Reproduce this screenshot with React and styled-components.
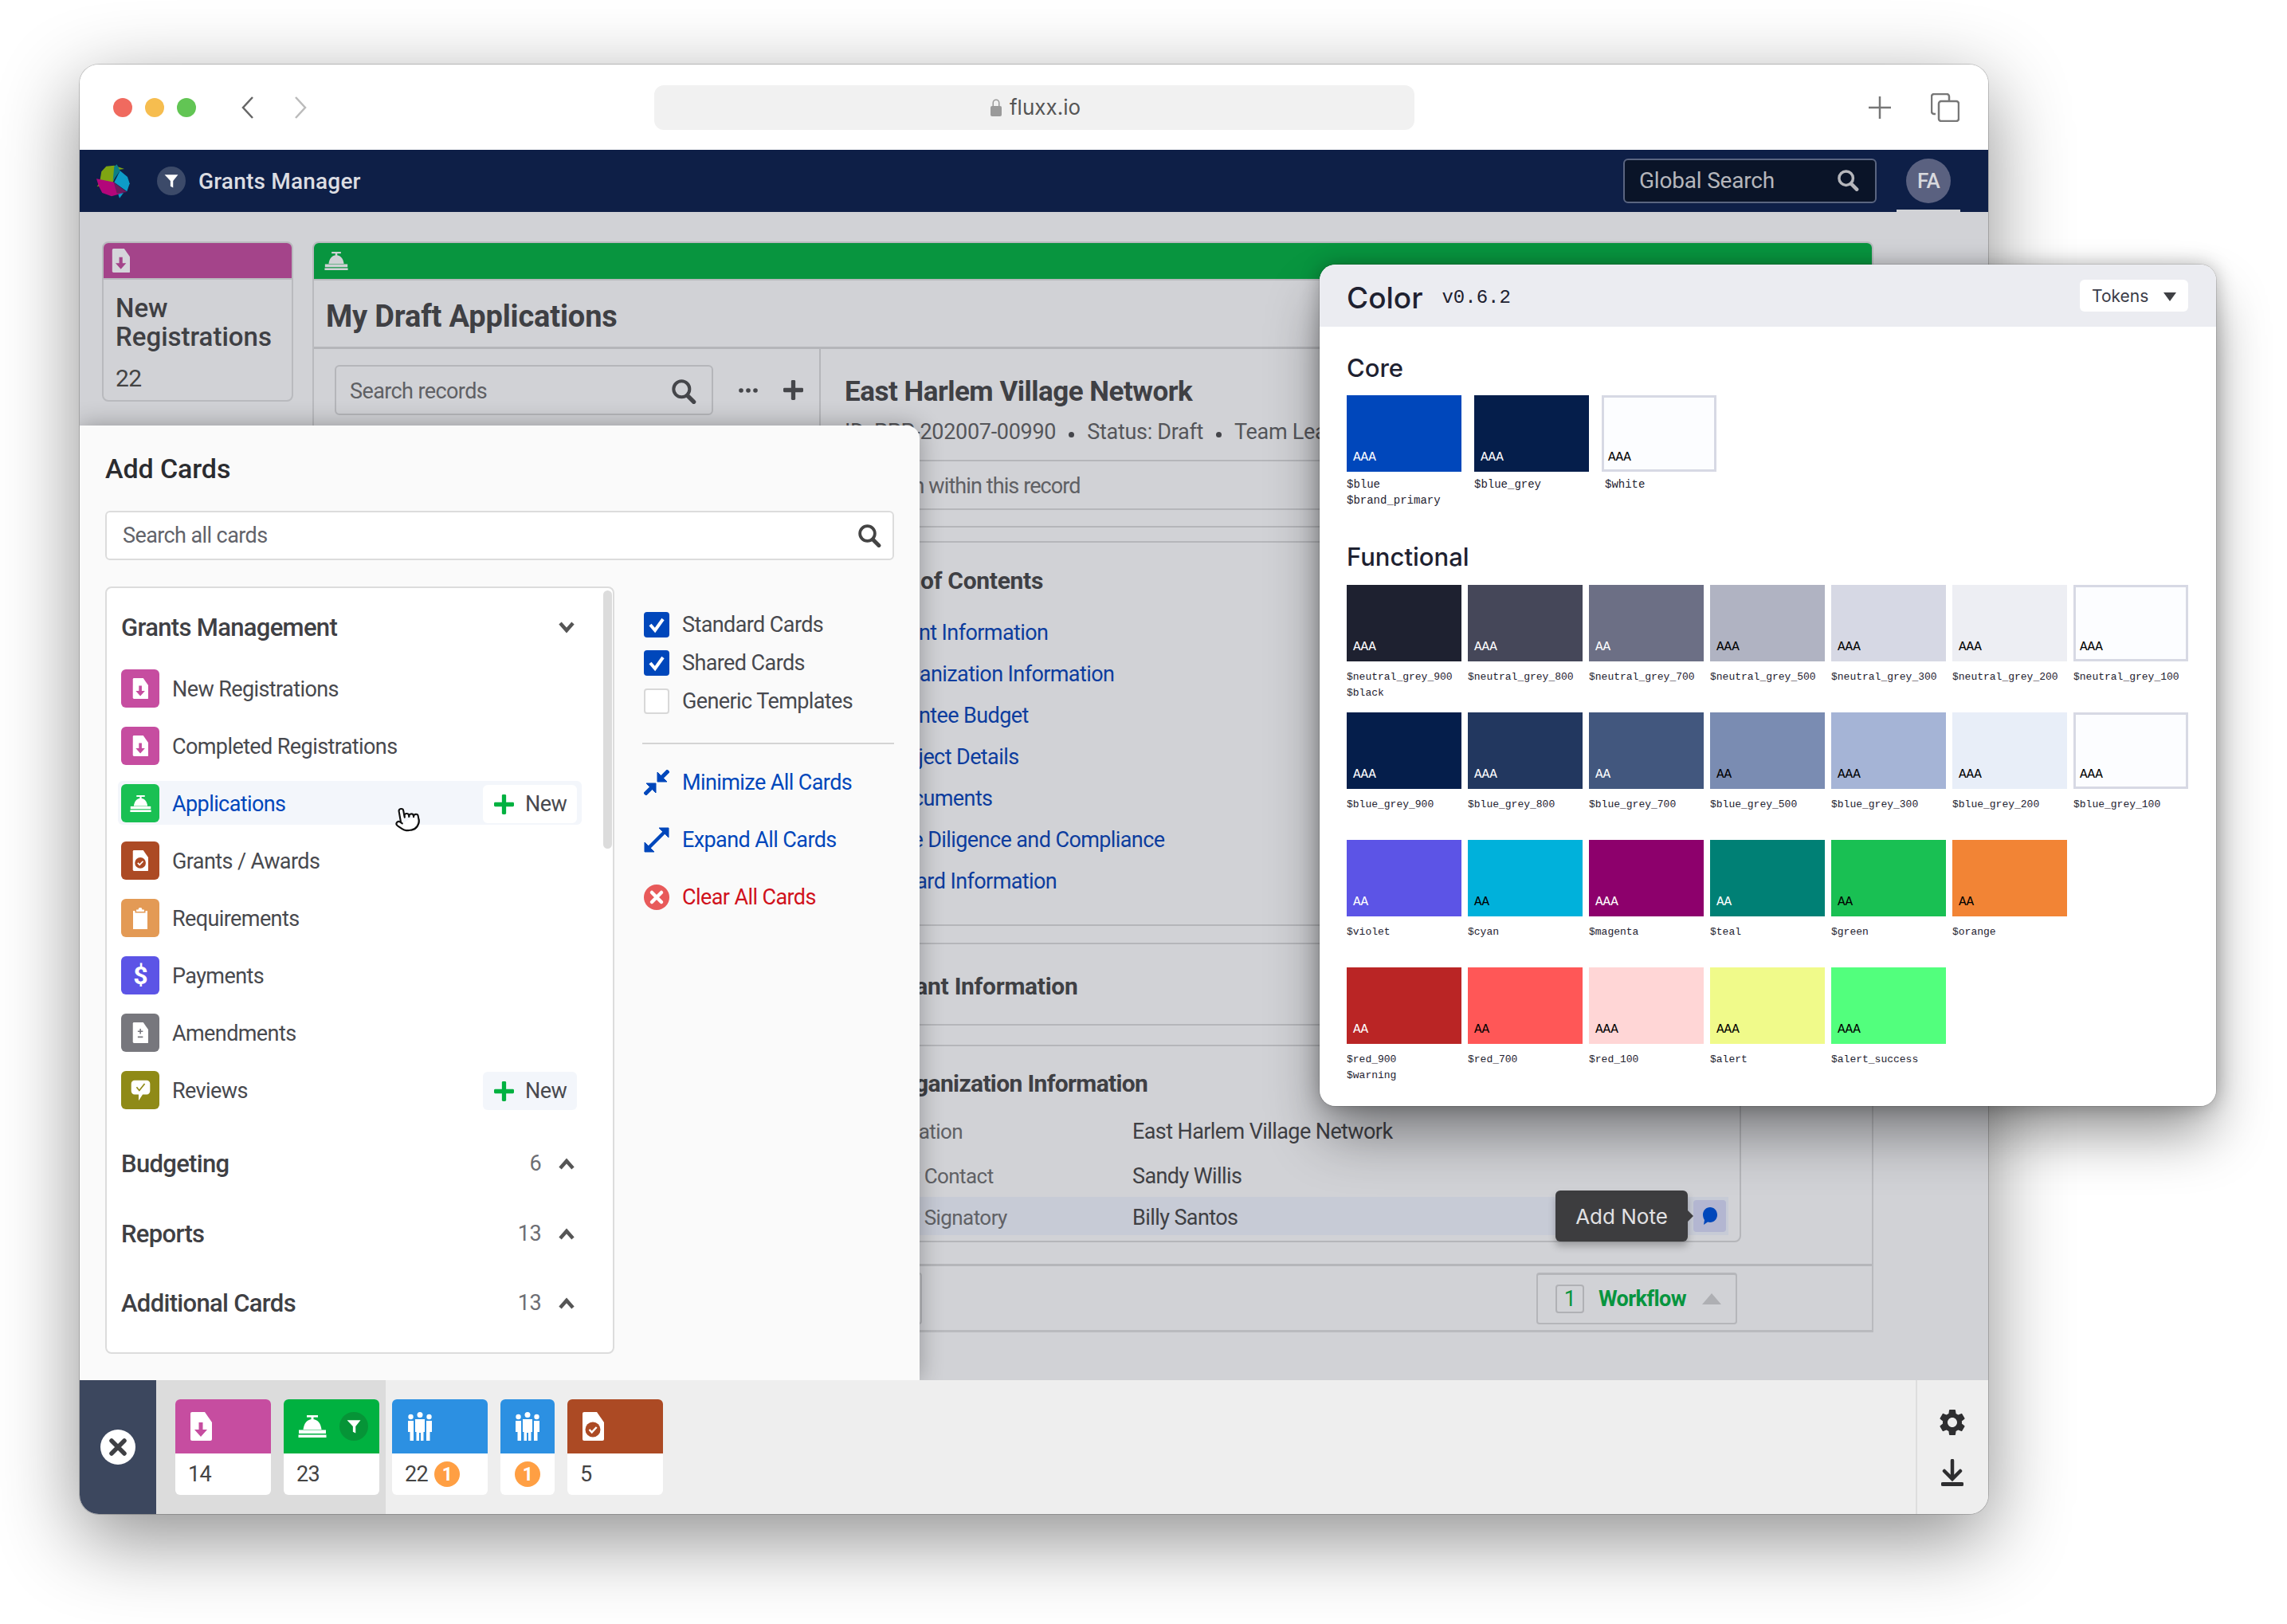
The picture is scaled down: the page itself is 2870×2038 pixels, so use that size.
import React from 'react'
import styled, { createGlobalStyle } from 'styled-components'
import { Pointer } from 'lucide-react'
import { MdSettings } from 'react-icons/md'

const SANS = 'Roboto, "Liberation Sans", Arial, sans-serif'
const UI = 'Inter, "Liberation Sans", sans-serif'
const MONO = '"Liberation Mono", "DejaVu Sans Mono", monospace'

const GlobalStyle = createGlobalStyle`
    html, body {
        margin: 0;
        padding: 0;
        background: #fff;
    }
    * {
        box-sizing: border-box;
        letter-spacing: -0.022em;
    }
`

const CORE = [
    { name: ['$blue', '$brand_primary'], color: '#0047bb', rating: 'AAA', light: true },
    { name: ['$blue_grey'], color: '#051e4b', rating: 'AAA', light: true },
    { name: ['$white'], color: '#fcfdff', rating: 'AAA', outlined: true },
]

const FUNCTIONAL = [
    { name: ['$neutral_grey_900', '$black'], color: '#1e2130', rating: 'AAA', light: true },
    { name: ['$neutral_grey_800'], color: '#454759', rating: 'AAA', light: true },
    { name: ['$neutral_grey_700'], color: '#6c6f85', rating: 'AA', light: true },
    { name: ['$neutral_grey_500'], color: '#b0b3c2', rating: 'AAA' },
    { name: ['$neutral_grey_300'], color: '#d6d8e4', rating: 'AAA' },
    { name: ['$neutral_grey_200'], color: '#edeef3', rating: 'AAA' },
    { name: ['$neutral_grey_100'], color: '#fcfdff', rating: 'AAA', outlined: true },
    { name: ['$blue_grey_900'], color: '#051e4b', rating: 'AAA', light: true },
    { name: ['$blue_grey_800'], color: '#22375f', rating: 'AAA', light: true },
    { name: ['$blue_grey_700'], color: '#42577e', rating: 'AA', light: true },
    { name: ['$blue_grey_500'], color: '#7a8cb2', rating: 'AA' },
    { name: ['$blue_grey_300'], color: '#a5b4d6', rating: 'AAA' },
    { name: ['$blue_grey_200'], color: '#e8eef8', rating: 'AAA' },
    { name: ['$blue_grey_100'], color: '#fcfdff', rating: 'AAA', outlined: true },
    { name: ['$violet'], color: '#5c54e6', rating: 'AA', light: true },
    { name: ['$cyan'], color: '#00b1db', rating: 'AA' },
    { name: ['$magenta'], color: '#8d006c', rating: 'AAA', light: true },
    { name: ['$teal'], color: '#008075', rating: 'AA', light: true },
    { name: ['$green'], color: '#19c053', rating: 'AA' },
    { name: ['$orange'], color: '#f28435', rating: 'AA' },
    null,
    { name: ['$red_900', '$warning'], color: '#ba2525', rating: 'AA', light: true },
    { name: ['$red_700'], color: '#ff5757', rating: 'AA' },
    { name: ['$red_100'], color: '#ffd6d6', rating: 'AAA' },
    { name: ['$alert'], color: '#f0fa8a', rating: 'AAA' },
    { name: ['$alert_success'], color: '#52ff7d', rating: 'AAA' },
]

const TOC = [
    'Grant Information',
    'Organization Information',
    'Grantee Budget',
    'Project Details',
    'Documents',
    'Due Diligence and Compliance',
    'Award Information',
]

function SearchIcon({ size = 30, color = '#444' }) {
    return (
        <svg width={size} height={size} viewBox="0 0 24 24" fill="none" stroke={color}>
            <circle cx="10" cy="10" r="7.5" strokeWidth="3" />
            <line x1="15.5" y1="16" x2="21.5" y2="22" strokeWidth="4" strokeLinecap="round" />
        </svg>
    )
}

function DocShape({ children, size = 36, fill = '#fff' }) {
    return (
        <svg width={size * 28 / 36} height={size} viewBox="0 0 28 36">
            <path d="M1 2a2 2 0 0 1 2-2H19L28 13V34a2 2 0 0 1-2 2H3a2 2 0 0 1-2-2Z" fill={fill} />
            {children}
        </svg>
    )
}

function DocArrow({ color, size, fill }) {
    return (
        <DocShape size={size} fill={fill}>
            <path d="M11.500 13h5v9h5.500L14 31l-8-9h5.500Z" fill={color} />
        </DocShape>
    )
}

function DocCheck({ color, size }) {
    return (
        <DocShape size={size}>
            <circle cx="14" cy="22" r="9.500" fill={color} />
            <path d="M9.500 22l3.200 3.400 6-6.400" fill="none" stroke="#fff" strokeWidth="2.400" />
        </DocShape>
    )
}

function DocPlusMinus({ color, size }) {
    return (
        <DocShape size={size}>
            <path d="M14 11v9M9.500 15.500h9M9.500 25.500h9" fill="none" stroke={color} strokeWidth="2.200" />
        </DocShape>
    )
}

function Bell({ size = 36, color = '#fff' }) {
    return (
        <svg width={size} height={size * 28 / 36} viewBox="0 0 36 28" fill={color}>
            <rect x="11" y="0" width="14" height="2.600" />
            <rect x="16.500" y="2" width="3" height="4" />
            <path d="M18 5c-6.500 0-10.500 5-11.500 13h23C28.500 10 24.500 5 18 5Z" />
            <path d="M1 18.500H35V23H1Z" />
            <rect x="0.500" y="24.500" width="35" height="3.500" />
        </svg>
    )
}

function People({ size = 36 }) {
    return (
        <svg width={size * 34 / 36} height={size} viewBox="0 0 34 36" fill="#fff">
            <circle cx="17" cy="3.500" r="3.500" />
            <circle cx="5.500" cy="6" r="3.200" />
            <circle cx="28.500" cy="6" r="3.200" />
            <path d="M11 9h12v16h-1.500v11h-3.500V26h-2v10h-3.500V25H11Z" />
            <path d="M2 11h7v25H4.500V25H2Z" />
            <path d="M25 11h7v14h-2.500v11H25Z" />
        </svg>
    )
}

function Funnel({ size = 18, color = '#fff' }) {
    return (
        <svg width={size} height={size} viewBox="0 0 16 16" fill={color}>
            <path d="M0.500 1H15.500L10 8V15.500L7 14V8Z" />
        </svg>
    )
}

function Clipboard() {
    return (
        <svg width="20" height="27" viewBox="0 0 24 33" fill="#fff">
            <path d="M9 3a3 3 0 0 1 6 0h3v3H6V3Z" />
            <path d="M1 5h3v3h16V5h3v28H1Z" />
        </svg>
    )
}

function SpeechCheck({ color }) {
    return (
        <svg width="27" height="27" viewBox="0 0 30 32">
            <path d="M6 1H24a5 5 0 0 1 5 5V17a5 5 0 0 1-5 5H18L12 31V22H6a5 5 0 0 1-5-5V6a5 5 0 0 1 5-5Z" fill="#fff" />
            <path d="M9 11l4 5 8-10" fill="none" stroke={color} strokeWidth="2" />
        </svg>
    )
}

function Logo() {
    return (
        <svg width="43" height="44" viewBox="0 0 43 44">
            <polygon points="5,24 7.300,10.300 13.300,3.700 23.300,2.700 36,7 28.300,8 21.700,23.700 1.700,29.300" fill="#7fa512" />
            <polygon points="23.300,3.700 26.700,1.300 30.700,9.300 21.700,22" fill="#0b7f86" />
            <polygon points="30.700,9.300 40,17 42.700,25.300 39.300,35.300 23.300,23.700" fill="#0d9cc8" />
            <polygon points="1,19.300 23.300,23.700 30,35.300 35,37 20,41.300 8.300,37 4,28.700" fill="#b3067a" />
            <polygon points="22.700,23.700 39.300,36 26.700,37.700" fill="#6d1a5e" />
            <polygon points="28.300,38.700 35,37 30,43.700" fill="#0d9cc8" />
        </svg>
    )
}

function Chevron({ up }) {
    return (
        <svg width="20" height="15" viewBox="0 0 20 15" fill="none" stroke="#555" strokeWidth="4.500">
            <path d={up ? 'M2 13L10 4l8 9' : 'M2 2l8 9 8-9'} />
        </svg>
    )
}

const Page = styled.div`
    width: 2870px;
    height: 2038px;
    padding: 81px 0 0 100px;
    overflow: hidden;
    font-family: ${SANS};
`
const Window = styled.div`
    position: relative;
    width: 2395px;
    height: 1819px;
    border-radius: 24px;
    box-shadow: 0 30px 100px rgba(0, 0, 0, 0.45), 0 0 0 1px rgba(0, 0, 0, 0.18);
`
const Chrome = styled.header`
    display: grid;
    grid-template-columns: 721px 954px 1fr;
    align-items: center;
    height: 107px;
    background: #fff;
    border-radius: 24px 24px 0 0;
`
const ChromeLeft = styled.div`
    display: flex;
    align-items: center;
    padding-left: 42px;
`
const Dot = styled.span`
    width: 24px;
    height: 24px;
    margin-right: 16px;
    border-radius: 50%;
    background: ${props => props.$color};
`
const NavArrows = styled.div`
    display: flex;
    gap: 50px;
    margin-left: 41px;
`
const UrlBar = styled.div`
    display: flex;
    align-items: center;
    height: 56px;
    padding-left: 421px;
    gap: 9px;
    border-radius: 12px;
    background: #f1f1f1;
    font-family: ${UI};
    font-size: 26px;
    letter-spacing: 0;
    color: #555;
`
const ChromeRight = styled.div`
    display: flex;
    align-items: center;
    justify-content: flex-end;
    gap: 50px;
    padding-right: 36px;
`
const AppNav = styled.nav`
    display: flex;
    align-items: center;
    height: 78px;
    padding: 0 47px 0 20px;
    background: #0e1f47;
`
const FilterBadge = styled.span`
    display: flex;
    align-items: center;
    justify-content: center;
    width: 36px;
    height: 36px;
    margin: ${props => props.$flush ? '0' : '0 16px 0 34px'};
    border-radius: 50%;
    background: ${props => props.$color};
`
const AppName = styled.span`
    font-weight: 500;
    font-size: 28px;
    letter-spacing: 0.2px;
    color: #dcdde2;
`
const GlobalSearch = styled.div`
    display: flex;
    align-items: center;
    justify-content: space-between;
    width: 318px;
    height: 56px;
    margin-left: auto;
    padding: 0 20px 2px 18px;
    border: 2px solid #5a6580;
    border-radius: 6px;
    background: #0a1428;
    font-size: 28px;
    letter-spacing: -0.2px;
    color: #b5b6bb;
`
const Avatar = styled.div`
    position: relative;
    display: flex;
    align-items: center;
    justify-content: center;
    width: 56px;
    height: 56px;
    margin-left: 37px;
    border-radius: 50%;
    background: #5a6180;
    font-weight: 500;
    font-size: 26px;
    color: #d8d9de;
    &::after {
        content: '';
        position: absolute;
        left: -12px;
        bottom: -12px;
        width: 80px;
        height: 4px;
        background: #d1d2d6;
    }
`
const Content = styled.main`
    display: flex;
    align-items: flex-start;
    gap: 24px;
    height: 1466px;
    padding: 37px 0 0 28px;
    overflow: hidden;
    background: #d1d2d6;
`
const MiniCard = styled.section`
    width: 240px;
    height: 201px;
    flex-shrink: 0;
    overflow: hidden;
    border: 2px solid #b9babe;
    border-radius: 8px;
`
const MiniHeader = styled.div`
    display: flex;
    align-items: center;
    height: 46px;
    padding-left: 10px;
    background: #a4448a;
    border-bottom: 2px solid #b9babe;
`
const MiniTitle = styled.div`
    margin: 18px 0 0 15px;
    font-weight: 500;
    font-size: 33px;
    line-height: 36px;
    letter-spacing: 0;
    color: #3f4044;
`
const MiniCount = styled.div`
    margin: 16px 0 0 15px;
    font-size: 30px;
    line-height: 36px;
    color: #444;
`
const MainCard = styled.section`
    width: 1959px;
    height: 1369px;
    flex-shrink: 0;
    overflow: hidden;
    border: 2px solid #b9babe;
    border-bottom-width: 3px;
    border-radius: 8px 8px 0 0;
`
const MainHeader = styled.div`
    display: flex;
    align-items: center;
    height: 47px;
    padding-left: 13px;
    background: #08953f;
    border-bottom: 2px solid #b9babe;
`
const MainTitle = styled.h1`
    display: flex;
    align-items: center;
    height: 86px;
    margin: 0;
    padding: 6px 0 0 15px;
    border-bottom: 3px solid #b5b6ba;
    font-size: 38px;
    font-weight: 700;
    letter-spacing: -0.17px;
    color: #3f4044;
`
const MainBody = styled.div`
    display: flex;
    height: 1232px;
`
const ListColumn = styled.div`
    display: flex;
    align-items: flex-start;
    width: 636px;
    padding: 20px 0 0 26px;
    border-right: 2px solid #b5b6ba;
`
const RecordSearch = styled.div`
    display: flex;
    align-items: center;
    justify-content: space-between;
    width: 475px;
    height: 63px;
    padding: 2px 19px 0 17px;
    border: 2px solid #b5b6ba;
    border-radius: 6px;
    font-size: 27px;
    color: #5f6064;
`
const ListTools = styled.div`
    display: flex;
    align-items: center;
    gap: 32px;
    height: 63px;
    margin-left: 32px;
`
const RecordColumn = styled.div`
    flex: 1;
    display: flex;
    flex-direction: column;
`
const RecordHead = styled.div`
    height: 141px;
    padding: 34px 0 0 30px;
    border-bottom: 2px solid #b5b6ba;
`
const RecordName = styled.h2`
    margin: 0;
    font-size: 35px;
    line-height: 40px;
    font-weight: 700;
    letter-spacing: -0.5px;
    color: #3f4044;
`
const RecordMeta = styled.div`
    display: flex;
    align-items: center;
    gap: 16px;
    margin-top: 12px;
    font-size: 27px;
    line-height: 36px;
    white-space: nowrap;
    color: #55565a;
    span {
        letter-spacing: -0.3px;
    }
`
const MetaDot = styled.span`
    width: 7px;
    height: 7px;
    margin-top: 6px;
    border-radius: 50%;
    background: #44454a;
`
const RecordSearchRow = styled.div`
    display: flex;
    align-items: center;
    height: 61px;
    padding: 2px 0 0 52px;
    border-bottom: 2px solid #b5b6ba;
    font-size: 27px;
    letter-spacing: -0.9px;
    color: #5f6064;
`
const Section = styled.div`
    height: ${props => props.$height}px;
    margin-top: ${props => props.$gap}px;
    padding-left: ${props => props.$indent}px;
    border-top: 2px solid #b5b6ba;
    border-bottom: 2px solid #b5b6ba;
`
const SectionStrip = styled.div`
    height: 19px;
    margin-top: 20px;
    border-top: 2px solid #b5b6ba;
`
const SectionTitle = styled.h3`
    margin: ${props => props.$top}px 0 0;
    padding-left: ${props => props.$indent || 0}px;
    font-size: 30px;
    line-height: 36px;
    font-weight: 700;
    letter-spacing: ${props => props.$spacing}px;
    color: #3f4044;
`
const TocList = styled.div`
    margin: 21px 0 0 37px;
`
const TocLink = styled.div`
    height: 52px;
    font-size: 27px;
    line-height: 52px;
    color: #0d3d9e;
`
const OrgSection = styled.div`
    position: relative;
    height: 248px;
    margin: 24px 164px 0 0;
    padding-top: 1px;
    border: 2px solid #b5b6ba;
    border-radius: 0 0 8px 0;
`
const OrgRows = styled.div`
    display: flex;
    flex-direction: column;
    gap: 2px;
    margin: 12px 14px 0 0;
`
const OrgRow = styled.div`
    position: relative;
    display: flex;
    align-items: center;
    height: ${props => props.$height}px;
    padding: 3px 0 0 36px;
    background: ${props => props.$active ? '#c7cbd6' : 'transparent'};
`
const OrgLabel = styled.span`
    width: 353px;
    font-size: 26px;
    color: #606165;
`
const OrgValue = styled.span`
    font-size: 27px;
    color: #3f4044;
`
const NoteButton = styled.span`
    position: absolute;
    right: 3px;
    top: 4px;
    display: flex;
    align-items: center;
    justify-content: center;
    width: 41px;
    height: 40px;
    border-radius: 4px;
    background: #b3b6d1;
`
const Tooltip = styled.div`
    position: absolute;
    right: 51px;
    top: -8px;
    display: flex;
    align-items: center;
    justify-content: center;
    width: 166px;
    height: 64px;
    border-radius: 6px;
    background: #3d3d3f;
    box-shadow: 0 6px 10px rgba(0, 0, 0, 0.25);
    font-family: ${UI};
    font-size: 26px;
    letter-spacing: 0;
    color: #e2e2e4;
    &::after {
        content: '';
        position: absolute;
        right: -7px;
        top: 25px;
        border-left: 7px solid #3d3d3f;
        border-top: 7px solid transparent;
        border-bottom: 7px solid transparent;
    }
`
const RecordFooter = styled.div`
    display: flex;
    align-items: center;
    justify-content: space-between;
    height: 84px;
    margin-top: 27px;
    padding-right: 169px;
    border-top: 3px solid #b5b6ba;
`
const FooterButton = styled.div`
    width: 127px;
    height: 65px;
    border: 2px solid #b5b6ba;
    border-radius: 4px;
`
const WorkflowButton = styled.div`
    display: flex;
    align-items: center;
    width: 252px;
    height: 65px;
    padding-left: 22px;
    border: 2px solid #b5b6ba;
    border-top-width: 3px;
    border-radius: 4px;
    font-size: 27px;
    font-weight: 700;
    color: #08953f;
`
const WorkflowCount = styled.span`
    display: flex;
    align-items: center;
    justify-content: center;
    width: 36px;
    height: 36px;
    margin-right: 18px;
    border: 2px solid #b0b1b5;
    border-radius: 4px;
    font-weight: 400;
`
const WorkflowCaret = styled.span`
    margin-left: 20px;
    border-left: 12px solid transparent;
    border-right: 12px solid transparent;
    border-bottom: 14px solid #aeafb3;
`
const Toolbar = styled.footer`
    position: relative;
    z-index: 4;
    display: flex;
    height: 168px;
    background: #eeeeee;
    border-radius: 0 0 24px 24px;
`
const CloseColumn = styled.div`
    display: flex;
    align-items: center;
    justify-content: center;
    width: 96px;
    background: #3c475e;
    border-radius: 0 0 0 24px;
`
const CloseCircle = styled.span`
    display: flex;
    align-items: center;
    justify-content: center;
    width: 44px;
    height: 44px;
    border-radius: 50%;
    background: #fff;
`
const CardGroup = styled.div`
    display: flex;
    gap: 16px;
    padding: 24px 8px 0 ${props => props.$left}px;
    background: ${props => props.$active ? '#dcdcdc' : 'transparent'};
`
const DockCard = styled.div`
    width: ${props => props.$compact ? 68 : 120}px;
    height: 120px;
    overflow: hidden;
    border-radius: 6px;
    background: #fff;
`
const DockHeader = styled.div`
    display: flex;
    align-items: center;
    justify-content: ${props => props.$compact ? 'center' : 'flex-start'};
    gap: 16px;
    height: 68px;
    padding: ${props => props.$compact ? '0' : '0 0 0 18px'};
    background: ${props => props.$color};
`
const DockCount = styled.div`
    display: flex;
    align-items: center;
    justify-content: ${props => props.$compact ? 'center' : 'flex-start'};
    gap: 8px;
    height: 52px;
    padding-left: ${props => props.$compact ? 0 : 16}px;
    font-size: 27px;
    color: #444;
`
const OrangeBadge = styled.span`
    display: flex;
    align-items: center;
    justify-content: center;
    width: 32px;
    height: 32px;
    border-radius: 50%;
    background: #ff9f43;
    font-weight: 700;
    font-size: 23px;
    color: #fff;
`
const DockTools = styled.div`
    display: flex;
    flex-direction: column;
    align-items: center;
    justify-content: center;
    gap: 26px;
    width: 91px;
    margin-left: auto;
    padding: 0 2px 2px 0;
    border-left: 2px solid #dedede;
`
const AddPanel = styled.aside`
    position: absolute;
    z-index: 3;
    left: 0;
    top: 453px;
    width: 1054px;
    height: 1198px;
    padding: 34px 32px 0;
    background: #fafafa;
    border-radius: 0 16px 0 0;
    box-shadow: 0 0 30px rgba(0, 0, 0, 0.3);
    clip-path: inset(-50px -50px 0 0);
`
const PanelTitle = styled.h2`
    margin: 0;
    font-weight: 500;
    font-size: 34px;
    line-height: 40px;
    letter-spacing: -0.1px;
    color: #2b2c30;
`
const AllSearch = styled.div`
    display: flex;
    align-items: center;
    justify-content: space-between;
    height: 62px;
    margin-top: 33px;
    padding: 0 14px 0 20px;
    border: 2px solid #dcdcdc;
    border-radius: 6px;
    background: #fff;
    font-size: 27px;
    color: #62636a;
`
const PanelColumns = styled.div`
    display: flex;
    gap: 35px;
    margin-top: 33px;
`
const CardList = styled.div`
    position: relative;
    width: 639px;
    height: 963px;
    padding: 25px 39px 0 18px;
    border: 2px solid #dcdcdc;
    border-radius: 8px;
    background: #fff;
`
const ScrollThumb = styled.span`
    position: absolute;
    right: 1px;
    top: 3px;
    width: 11px;
    height: 324px;
    border-radius: 6px;
    background: #dcdcdc;
`
const GroupHeader = styled.div`
    display: flex;
    align-items: center;
    height: 48px;
    margin-top: ${props => props.$gap}px;
    padding-right: 9px;
`
const GroupName = styled.span`
    font-weight: 500;
    font-size: 31px;
    color: #3f4044;
`
const GroupCount = styled.span`
    margin: 0 22px 0 auto;
    font-size: 27px;
    color: #6d6e73;
`
const GroupChevron = styled.span`
    display: flex;
    margin-left: ${props => props.$push ? 'auto' : '0'};
`
const ItemList = styled.div`
    display: flex;
    flex-direction: column;
    gap: 24px;
    margin: 29px 0 44px;
`
const Item = styled.div`
    position: relative;
    display: flex;
    align-items: center;
    height: 48px;
    &::before {
        content: '';
        display: ${props => props.$active ? 'block' : 'none'};
        position: absolute;
        left: -4px;
        right: 0;
        top: -4px;
        bottom: -3px;
        border-radius: 6px;
        background: #f3f6fb;
    }
`
const ItemIcon = styled.span`
    position: relative;
    display: flex;
    align-items: center;
    justify-content: center;
    flex-shrink: 0;
    width: 48px;
    height: 48px;
    border-radius: 6px;
    background: ${props => props.$color};
    font-size: 32px;
    font-weight: 700;
    color: #fff;
`
const ItemBody = styled.div`
    position: relative;
    flex: 1;
    display: flex;
    align-items: center;
    justify-content: space-between;
    height: 48px;
    padding: 2px 6px 0 16px;
    font-size: 27px;
    color: ${props => props.$active ? '#0047bb' : '#48494e'};
`
const NewButton = styled.span`
    display: flex;
    align-items: center;
    gap: 14px;
    width: 118px;
    height: 48px;
    padding-left: 14px;
    border-radius: 6px;
    background: ${props => props.$active ? '#fff' : '#f3f6fb'};
    font-size: 27px;
    color: #48494e;
`
const PlusMark = styled.svg`
    width: 25px;
    height: 25px;
`
const Cursor = styled.span`
    position: absolute;
    left: 394px;
    top: 477px;
    display: flex;
    transform: rotate(-10deg);
`
const SideColumn = styled.div`
    width: 316px;
    padding-top: 32px;
`
const CheckRow = styled.div`
    display: flex;
    align-items: center;
    gap: 16px;
    height: 32px;
    margin: 0 0 16px 2px;
    font-size: 27px;
    color: #48494e;
`
const CheckBox = styled.span`
    display: flex;
    align-items: center;
    justify-content: center;
    width: 32px;
    height: 32px;
    border-radius: 4px;
    border: ${props => props.$checked ? 'none' : '2px solid #d8d8d8'};
    background: ${props => props.$checked ? '#0047bb' : '#fff'};
`
const SideDivider = styled.div`
    height: 2px;
    margin: 36px 0 32px;
    background: #d4d4d4;
`
const ActionRow = styled.div`
    display: flex;
    align-items: center;
    gap: 16px;
    height: 32px;
    margin: 0 0 40px 2px;
    font-size: 27px;
    color: ${props => props.$color};
`
const ColorPanel = styled.aside`
    position: absolute;
    z-index: 5;
    left: 1556px;
    top: 251px;
    width: 1125px;
    height: 1056px;
    overflow: hidden;
    border-radius: 20px;
    background: #fff;
    box-shadow: 0 0 0 1px rgba(0, 0, 0, 0.12);
`
const PanelShadow = styled.div`
    position: absolute;
    z-index: 5;
    left: 1556px;
    top: 251px;
    width: 1125px;
    height: 1056px;
    border-radius: 20px;
    box-shadow: 0 40px 70px -6px rgba(0, 0, 0, 0.42), 0 0 24px rgba(0, 0, 0, 0.28);
`
const ColorHeader = styled.div`
    display: flex;
    align-items: center;
    height: 78px;
    padding: 5px 35px 0 34px;
    background: #ebecf1;
`
const ColorTitle = styled.h2`
    margin: 0;
    font-family: ${UI};
    font-weight: 500;
    font-size: 37px;
    letter-spacing: 0;
    color: #1e2130;
`
const Version = styled.span`
    margin-left: 24px;
    font-family: ${MONO};
    font-size: 24px;
    letter-spacing: 0;
    color: #1e2130;
`
const TokenSelect = styled.div`
    display: flex;
    align-items: center;
    justify-content: space-between;
    width: 136px;
    height: 40px;
    margin: 0 0 5px auto;
    padding: 0 15px;
    border-radius: 6px;
    background: #fff;
    font-family: ${UI};
    font-size: 21px;
    letter-spacing: 0;
    color: #3a3c48;
`
const SelectCaret = styled.span`
    margin-top: 3px;
    border-top: 11px solid #3f4044;
    border-left: 8px solid transparent;
    border-right: 8px solid transparent;
`
const ColorBody = styled.div`
    padding: 32px 35px 0 34px;
`
const ColorGroupTitle = styled.h3`
    margin: 0;
    font-family: ${UI};
    font-weight: 500;
    font-size: 31px;
    line-height: 40px;
    letter-spacing: 0;
    color: #1e2130;
`
const CoreRow = styled.div`
    display: flex;
    gap: 16px;
    height: 183px;
    margin-top: 14px;
`
const SwatchGrid = styled.div`
    display: grid;
    grid-template-columns: repeat(7, 144px);
    grid-auto-rows: 160px;
    column-gap: 8px;
    margin-top: 15px;
`
const SwatchCell = styled.div`
    width: 144px;
`
const SwatchBlock = styled.div`
    display: flex;
    align-items: flex-end;
    height: 96px;
    padding: 0 0 8px 8px;
    background: ${props => props.$color};
    box-shadow: ${props => props.$outlined ? 'inset 0 0 0 3px #d7d9e4' : 'none'};
    font-family: ${MONO};
    font-size: 16px;
    line-height: 20px;
    letter-spacing: 0;
    color: ${props => props.$light ? '#fff' : '#000'};
`
const SwatchName = styled.div`
    margin-top: ${props => props.$core ? 6 : 10}px;
    padding-left: ${props => props.$core && props.$outlined ? 4 : 0}px;
    font-family: ${MONO};
    font-size: ${props => props.$core ? 14 : 13}px;
    line-height: 20px;
    white-space: nowrap;
    color: #1e2130;
    div {
        letter-spacing: 0;
    }
`

function Swatch({ swatch, core }) {
    return (
        <SwatchCell>
            <SwatchBlock $color={swatch.color} $light={swatch.light} $outlined={swatch.outlined}>
                {swatch.rating}
            </SwatchBlock>
            <SwatchName $core={core} $outlined={swatch.outlined}>
                {swatch.name.map(line => <div key={line}>{line}</div>)}
            </SwatchName>
        </SwatchCell>
    )
}

function Plus({ color = '#00b140' }) {
    return (
        <PlusMark viewBox="0 0 26 26" fill={color}>
            <rect x="10.250" y="0" width="5.500" height="26" rx="1.500" />
            <rect x="0" y="10.250" width="26" height="5.500" rx="1.500" />
        </PlusMark>
    )
}

function CardRow({ icon, color, label, active, canAdd }) {
    return (
        <Item $active={active}>
            <ItemIcon $color={color}>{icon}</ItemIcon>
            <ItemBody $active={active}>
                {label}
                {canAdd && <NewButton $active={active}><Plus />New</NewButton>}
            </ItemBody>
        </Item>
    )
}

function CollapsedGroup({ name, count, gap }) {
    return (
        <GroupHeader $gap={gap}>
            <GroupName>{name}</GroupName>
            <GroupCount>{count}</GroupCount>
            <GroupChevron><Chevron up /></GroupChevron>
        </GroupHeader>
    )
}

function App() {
    return (
        <Page>
            <GlobalStyle />
            <Window>
                <Chrome>
                    <ChromeLeft>
                        <Dot $color="#f06a5f" />
                        <Dot $color="#f6bd4f" />
                        <Dot $color="#62c554" />
                        <NavArrows>
                            <svg width="16" height="28" viewBox="0 0 16 28" fill="none" stroke="#666" strokeWidth="2.500"><path d="M14 1L2 14l12 13" /></svg>
                            <svg width="16" height="28" viewBox="0 0 16 28" fill="none" stroke="#bbb" strokeWidth="2.500"><path d="M2 1l12 13L2 27" /></svg>
                        </NavArrows>
                    </ChromeLeft>
                    <UrlBar>
                        <svg width="16" height="24" viewBox="0 0 16 24" fill="#9a9a9a">
                            <path d="M3.500 10V6a4.500 4.500 0 0 1 9 0v4H11V6a3 3 0 0 0-6 0v4Z" />
                            <rect x="1" y="10" width="14" height="13" rx="2" />
                        </svg>
                        fluxx.io
                    </UrlBar>
                    <ChromeRight>
                        <svg width="28" height="28" viewBox="0 0 28 28" stroke="#777" strokeWidth="2.500"><path d="M14 0v28M0 14h28" /></svg>
                        <svg width="36" height="36" viewBox="0 0 36 36" fill="none" stroke="#777" strokeWidth="2.500">
                            <path d="M6 26H4a3 3 0 0 1-3-3V4a3 3 0 0 1 3-3h16a3 3 0 0 1 3 3v5" />
                            <rect x="10" y="10" width="25" height="25" rx="3" />
                        </svg>
                    </ChromeRight>
                </Chrome>
                <AppNav>
                    <Logo />
                    <FilterBadge $color="#3c4a69"><Funnel /></FilterBadge>
                    <AppName>Grants Manager</AppName>
                    <GlobalSearch>
                        Global Search
                        <SearchIcon size={28} color="#b5b6bb" />
                    </GlobalSearch>
                    <Avatar>FA</Avatar>
                </AppNav>
                <Content>
                    <MiniCard>
                        <MiniHeader><DocArrow color="#a4448a" size={30} fill="#d5d5da" /></MiniHeader>
                        <MiniTitle>New Registrations</MiniTitle>
                        <MiniCount>22</MiniCount>
                    </MiniCard>
                    <MainCard>
                        <MainHeader><Bell size={30} color="#d1d2d6" /></MainHeader>
                        <MainTitle>My Draft Applications</MainTitle>
                        <MainBody>
                            <ListColumn>
                                <RecordSearch>
                                    Search records
                                    <SearchIcon size={32} color="#45464a" />
                                </RecordSearch>
                                <ListTools>
                                    <svg width="24" height="6" viewBox="0 0 24 6" fill="#45464a">
                                        <circle cx="3" cy="3" r="2.800" />
                                        <circle cx="12" cy="3" r="2.800" />
                                        <circle cx="21" cy="3" r="2.800" />
                                    </svg>
                                    <Plus color="#45464a" />
                                </ListTools>
                            </ListColumn>
                            <RecordColumn>
                                <RecordHead>
                                    <RecordName>East Harlem Village Network</RecordName>
                                    <RecordMeta>
                                        <span>ID: PPP-202007-00990</span>
                                        <MetaDot />
                                        <span>Status: Draft</span>
                                        <MetaDot />
                                        <span>Team Lead: Sandy Willis</span>
                                    </RecordMeta>
                                </RecordHead>
                                <RecordSearchRow>Search within this record</RecordSearchRow>
                                <SectionStrip />
                                <Section $height={483} $gap={0} $indent={46}>
                                    <SectionTitle $top={30} $spacing={-0.3}>Table of Contents</SectionTitle>
                                    <TocList>
                                        {TOC.map(link => <TocLink key={link}>{link}</TocLink>)}
                                    </TocList>
                                </Section>
                                <Section $height={104} $gap={21} $indent={88}>
                                    <SectionTitle $top={35} $spacing={-0.3}>Grant Information</SectionTitle>
                                </Section>
                                <OrgSection>
                                    <SectionTitle $top={28} $indent={86} $spacing={-0.66}>Organization Information</SectionTitle>
                                    <OrgRows>
                                        <OrgRow $height={56}>
                                            <OrgLabel>Organization</OrgLabel>
                                            <OrgValue>East Harlem Village Network</OrgValue>
                                        </OrgRow>
                                        <OrgRow $height={52}>
                                            <OrgLabel>Primary Contact</OrgLabel>
                                            <OrgValue>Sandy Willis</OrgValue>
                                        </OrgRow>
                                        <OrgRow $height={48} $active>
                                            <OrgLabel>Primary Signatory</OrgLabel>
                                            <OrgValue>Billy Santos</OrgValue>
                                            <Tooltip>Add Note</Tooltip>
                                            <NoteButton>
                                                <svg width="20" height="24" viewBox="0 0 20 24" fill="#0047bb">
                                                    <path d="M10 1c5 0 9 4 9 9.500S15 20 10 20c-1 0-2-.2-3-.5L2 23l1-6C2 15.500 1 13 1 10.500 1 5 5 1 10 1Z" />
                                                </svg>
                                            </NoteButton>
                                        </OrgRow>
                                    </OrgRows>
                                </OrgSection>
                                <RecordFooter>
                                    <FooterButton />
                                    <WorkflowButton>
                                        <WorkflowCount>1</WorkflowCount>
                                        Workflow
                                        <WorkflowCaret />
                                    </WorkflowButton>
                                </RecordFooter>
                            </RecordColumn>
                        </MainBody>
                    </MainCard>
                </Content>
                <Toolbar>
                    <CloseColumn>
                        <CloseCircle>
                            <svg width="24" height="24" viewBox="0 0 24 24" stroke="#3f4044" strokeWidth="5.500" strokeLinecap="round"><path d="M4 4l16 16M20 4L4 20" /></svg>
                        </CloseCircle>
                    </CloseColumn>
                    <CardGroup $active $left={24}>
                        <DockCard>
                            <DockHeader $color="#c64da0"><DocArrow color="#c64da0" /></DockHeader>
                            <DockCount>14</DockCount>
                        </DockCard>
                        <DockCard>
                            <DockHeader $color="#00b140">
                                <Bell />
                                <FilterBadge $flush $color="#069437"><Funnel /></FilterBadge>
                            </DockHeader>
                            <DockCount>23</DockCount>
                        </DockCard>
                    </CardGroup>
                    <CardGroup $left={8}>
                        <DockCard>
                            <DockHeader $color="#2c90e2"><People /></DockHeader>
                            <DockCount>22<OrangeBadge>1</OrangeBadge></DockCount>
                        </DockCard>
                        <DockCard $compact>
                            <DockHeader $compact $color="#2c90e2"><People /></DockHeader>
                            <DockCount $compact><OrangeBadge>1</OrangeBadge></DockCount>
                        </DockCard>
                        <DockCard>
                            <DockHeader $color="#ac4a24"><DocCheck color="#ac4a24" /></DockHeader>
                            <DockCount>5</DockCount>
                        </DockCard>
                    </CardGroup>
                    <DockTools>
                        <MdSettings size={40} color="#2e2e30" />
                        <svg width="28" height="34" viewBox="0 0 28 34" fill="none" stroke="#2e2e30" strokeWidth="4.500" strokeLinecap="round">
                            <path d="M14 2v22M4 15l10 10 10-10" />
                            <path d="M2 31.500h24" strokeWidth="5" />
                        </svg>
                    </DockTools>
                </Toolbar>
                <AddPanel>
                    <PanelTitle>Add Cards</PanelTitle>
                    <AllSearch>
                        Search all cards
                        <SearchIcon />
                    </AllSearch>
                    <PanelColumns>
                        <CardList>
                            <ScrollThumb />
                            <GroupHeader $gap={0}>
                                <GroupName>Grants Management</GroupName>
                                <GroupChevron $push><Chevron /></GroupChevron>
                            </GroupHeader>
                            <ItemList>
                                <CardRow color="#c64da0" label="New Registrations" icon={<DocArrow color="#c64da0" size={26} />} />
                                <CardRow color="#c64da0" label="Completed Registrations" icon={<DocArrow color="#c64da0" size={26} />} />
                                <CardRow color="#19c053" label="Applications" icon={<Bell size={27} />} active canAdd />
                                <CardRow color="#ac4a24" label="Grants / Awards" icon={<DocCheck color="#ac4a24" size={26} />} />
                                <CardRow color="#e39a55" label="Requirements" icon={<Clipboard />} />
                                <CardRow color="#5c54e6" label="Payments" icon="$" />
                                <CardRow color="#77777d" label="Amendments" icon={<DocPlusMinus color="#77777d" size={26} />} />
                                <CardRow color="#8f8a17" label="Reviews" icon={<SpeechCheck color="#8f8a17" />} canAdd />
                            </ItemList>
                            <CollapsedGroup name="Budgeting" count="6" gap={0} />
                            <CollapsedGroup name="Reports" count="13" gap={40} />
                            <CollapsedGroup name="Additional Cards" count="13" gap={39} />
                        </CardList>
                        <SideColumn>
                            <CheckRow>
                                <CheckBox $checked>
                                    <svg width="22" height="22" viewBox="0 0 22 22" fill="none" stroke="#fff" strokeWidth="4"><path d="M3 11l6 7L19 4" /></svg>
                                </CheckBox>
                                Standard Cards
                            </CheckRow>
                            <CheckRow>
                                <CheckBox $checked>
                                    <svg width="22" height="22" viewBox="0 0 22 22" fill="none" stroke="#fff" strokeWidth="4"><path d="M3 11l6 7L19 4" /></svg>
                                </CheckBox>
                                Shared Cards
                            </CheckRow>
                            <CheckRow>
                                <CheckBox />
                                Generic Templates
                            </CheckRow>
                            <SideDivider />
                            <ActionRow $color="#0047bb">
                                <svg width="32" height="32" viewBox="0 0 32 32" fill="#0047bb" stroke="#0047bb">
                                    <path d="M31 1L20 12M1 31l11-11" fill="none" strokeWidth="5" />
                                    <path d="M17 3v12h12ZM3 17h12v12Z" strokeWidth="1" />
                                </svg>
                                Minimize All Cards
                            </ActionRow>
                            <ActionRow $color="#0047bb">
                                <svg width="32" height="32" viewBox="0 0 32 32" fill="#0047bb" stroke="#0047bb">
                                    <path d="M26 6L6 26" fill="none" strokeWidth="4.500" />
                                    <path d="M19 1h12v12ZM1 19v12h12Z" strokeWidth="1" />
                                </svg>
                                Expand All Cards
                            </ActionRow>
                            <ActionRow $color="#d0111c">
                                <svg width="32" height="32" viewBox="0 0 32 32">
                                    <circle cx="16" cy="16" r="16" fill="#e85a5a" />
                                    <path d="M10 10l12 12M22 10L10 22" stroke="#fff" strokeWidth="4.500" strokeLinecap="round" />
                                </svg>
                                Clear All Cards
                            </ActionRow>
                        </SideColumn>
                    </PanelColumns>
                    <Cursor><Pointer size={34} color="#111" fill="#fff" strokeWidth={1.5} /></Cursor>
                </AddPanel>
                <PanelShadow />
                <ColorPanel>
                    <ColorHeader>
                        <ColorTitle>Color</ColorTitle>
                        <Version>v0.6.2</Version>
                        <TokenSelect>Tokens<SelectCaret /></TokenSelect>
                    </ColorHeader>
                    <ColorBody>
                        <ColorGroupTitle>Core</ColorGroupTitle>
                        <CoreRow>
                            {CORE.map(swatch => <Swatch key={swatch.color} swatch={swatch} core />)}
                        </CoreRow>
                        <ColorGroupTitle>Functional</ColorGroupTitle>
                        <SwatchGrid>
                            {FUNCTIONAL.map((swatch, i) => swatch ? <Swatch key={i} swatch={swatch} /> : <span key={i} />)}
                        </SwatchGrid>
                    </ColorBody>
                </ColorPanel>
            </Window>
        </Page>
    )
}

export default App
